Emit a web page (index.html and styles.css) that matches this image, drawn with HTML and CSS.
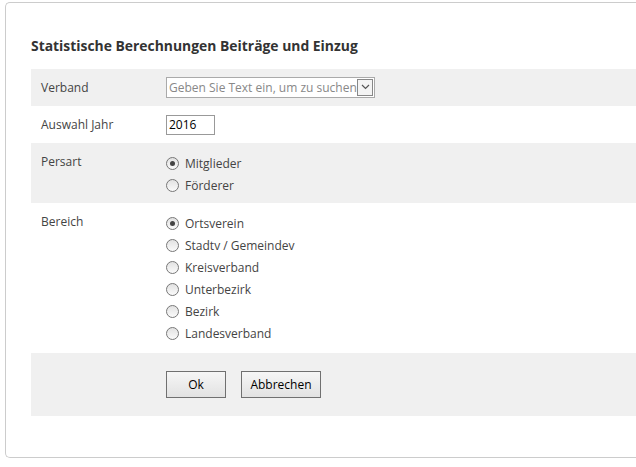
FILE: index.html
```html
<!DOCTYPE html>
<html lang="de">
<head>
  <meta charset="UTF-8" />
  <title>Statistische Berechnungen</title>
  <link rel="stylesheet" href="styles.css">
</head>
<body>

  <div class="stat-card">
    <h2>Statistische Berechnungen Beiträge und Einzug</h2>

    <form class="stat-form">
      <div class="form-row shaded middle">
        <div class="form-label">Verband</div>
        <div class="form-field">
          <div class="combo">
            <span class="combo-text">Geben Sie Text ein, um zu suchen</span>
            <span class="combo-btn">
              <svg width="9" height="6" viewBox="0 0 9 6"><path d="M1 1 L4.5 4.5 L8 1" fill="none" stroke="#555" stroke-width="1.2"/></svg>
            </span>
          </div>
        </div>
      </div>

      <div class="form-row middle">
        <div class="form-label">Auswahl Jahr</div>
        <div class="form-field">
          <input type="text" class="year-input" value="2016">
        </div>
      </div>

      <div class="form-row shaded">
        <div class="form-label">Persart</div>
        <div class="form-field">
          <label class="radio"><input type="radio" name="persart" checked> Mitglieder</label>
          <label class="radio"><input type="radio" name="persart"> Förderer</label>
        </div>
      </div>

      <div class="form-row tall">
        <div class="form-label">Bereich</div>
        <div class="form-field">
          <label class="radio"><input type="radio" name="bereich" checked> Ortsverein</label>
          <label class="radio"><input type="radio" name="bereich"> Stadtv / Gemeindev</label>
          <label class="radio"><input type="radio" name="bereich"> Kreisverband</label>
          <label class="radio"><input type="radio" name="bereich"> Unterbezirk</label>
          <label class="radio"><input type="radio" name="bereich"> Bezirk</label>
          <label class="radio"><input type="radio" name="bereich"> Landesverband</label>
        </div>
      </div>

      <div class="form-row shaded actions">
        <div class="form-label"></div>
        <div class="form-field">
          <button type="button" class="btn btn-ok">Ok</button>
          <button type="button" class="btn">Abbrechen</button>
        </div>
      </div>
    </form>
  </div>

</body>
</html>
```

FILE: styles.css
```css
body {
  margin: 2px 0 0 5px;
  font-family: "Open Sans", "Noto Sans", sans-serif;
  font-size: 12px;
  color: #444;
  background: #fff;
}

.stat-card {
  border: 1px solid #ccc;
  border-right: none;
  border-radius: 5px 0 0 5px;
  padding: 33px 0 41px 25px;
}

.stat-card h2 {
  margin: 0 0 13px;
  font-size: 13.9px;
  line-height: 20px;
  font-weight: bold;
  color: #333;
}

.form-row {
  display: flex;
  padding: 9px 0 7px;
}

.form-row.shaded {
  background: #f0f0f0;
}

.form-row.middle {
  align-items: center;
  height: 37px;
  padding: 0;
  box-sizing: border-box;
}

.form-row.tall {
  padding-bottom: 9px;
}

.form-row.actions {
  padding: 18px 0;
}

.form-label {
  width: 125px;
  padding-left: 10px;
  line-height: 20px;
}

.form-field {
  display: flex;
  flex-direction: column;
}

.form-row.actions .form-field {
  flex-direction: row;
  gap: 15px;
}

.combo {
  display: flex;
  align-items: center;
  width: 207px;
  height: 19px;
  border: 1px solid #aaa;
  background: #fff;
  margin-top: -1px;
}

.combo-text {
  flex: 1;
  overflow: hidden;
  white-space: nowrap;
  color: #888;
  padding-left: 2px;
  line-height: 19px;
}

.combo-btn {
  display: flex;
  align-items: center;
  justify-content: center;
  width: 14px;
  height: 15px;
  margin-right: 1px;
  border: 1px solid #888;
  background: #f4f4f4;
}

.year-input {
  width: 43px;
  height: 18px;
  margin: 0;
  padding: 0 2px;
  border: 1px solid #999;
  font-family: inherit;
  font-size: 12px;
  color: #000;
}

.radio {
  display: flex;
  align-items: center;
  height: 22px;
  gap: 6px;
}

.radio input {
  appearance: none;
  margin: 0;
  width: 13px;
  height: 13px;
  border: 1px solid #777;
  border-radius: 50%;
  background: linear-gradient(#e2e2e2, #fafafa);
  display: flex;
  align-items: center;
  justify-content: center;
}

.radio input:checked::after {
  content: "";
  width: 5px;
  height: 5px;
  border-radius: 50%;
  background: #444;
}

.btn {
  height: 27px;
  padding: 0 8px;
  border: 1px solid #707070;
  background: linear-gradient(#f6f6f6, #e2e2e2);
  font-family: inherit;
  font-size: 12px;
  color: #000;
}

.btn-ok {
  width: 60px;
}

.btn + .btn {
  width: 80px;
}
```
